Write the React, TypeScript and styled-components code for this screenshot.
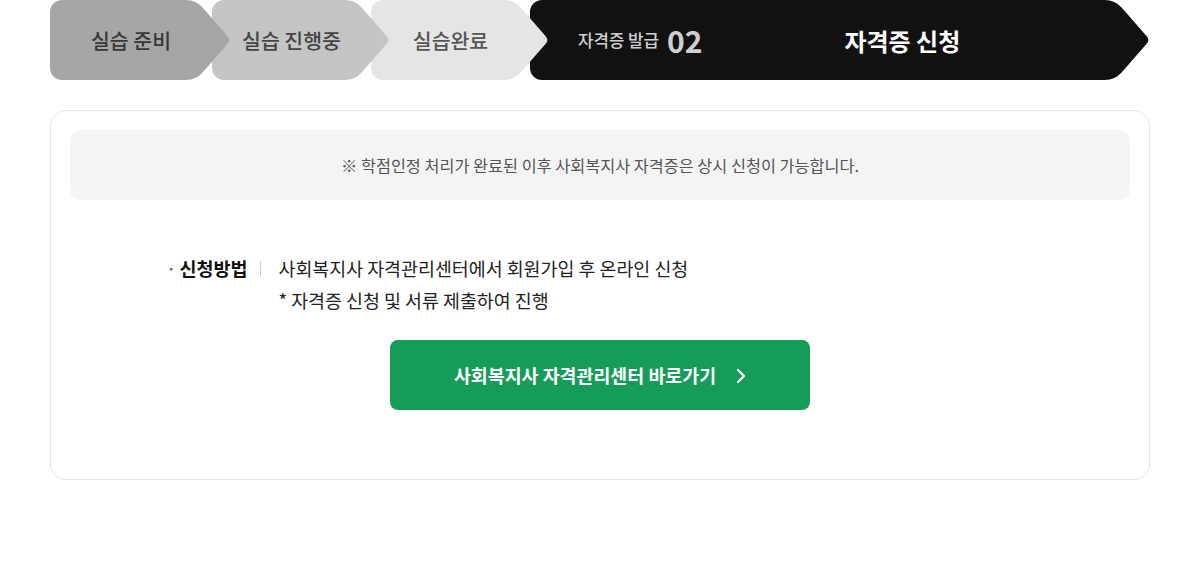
import React from 'react';
import styled, { createGlobalStyle } from 'styled-components';

const GlobalStyle = createGlobalStyle`
  * { box-sizing: border-box; }
  body {
    margin: 0;
    background: #ffffff;
    font-family: "Noto Sans CJK KR", "Noto Sans", sans-serif;
    color: #222222;
  }
`

const STEP_H = 80
const ARROW = 35

// chevron outline for a step of width w
function chevronPath(w: number) {
  const r = 12
  const k = 10
  const k2 = 5
  const dx = 0.659
  const dy = 0.753
  const b = w - ARROW
  const m = STEP_H / 2
  return [
    `M ${r} 0`,
    `L ${b - k} 0`,
    `Q ${b} 0 ${b + k * dx} ${k * dy}`,
    `L ${w - k2 * dx} ${m - k2 * dy}`,
    `Q ${w} ${m} ${w - k2 * dx} ${m + k2 * dy}`,
    `L ${b + k * dx} ${STEP_H - k * dy}`,
    `Q ${b} ${STEP_H} ${b - k} ${STEP_H}`,
    `L ${r} ${STEP_H}`,
    `A ${r} ${r} 0 0 1 0 ${STEP_H - r}`,
    `L 0 ${r}`,
    `A ${r} ${r} 0 0 1 ${r} 0`,
    'Z',
  ].join(' ')
}

const steps = [
  { label: '실습 준비', width: 181, bg: '#a6a6a6', color: '#383838' },
  { label: '실습 진행중', width: 178, bg: '#c5c5c5', color: '#444444' },
  { label: '실습완료', width: 178, bg: '#e5e5e5', color: '#555555' },
]

function App() {
  return (
    <>
      <GlobalStyle />
      <Page>
        <StepBar>
          {steps.map((s, i) => (
            <Step key={s.label} $width={s.width} $z={10 - i}>
              <StepShape width={s.width} height={STEP_H} viewBox={`0 0 ${s.width} ${STEP_H}`}>
                <path d={chevronPath(s.width)} fill={s.bg} />
              </StepShape>
              <StepLabel $color={s.color}>{s.label}</StepLabel>
            </Step>
          ))}
          <Step $width={620} $z={5}>
            <StepShape width={620} height={STEP_H} viewBox={`0 0 620 ${STEP_H}`}>
              <path d={chevronPath(620)} fill="#111111" />
            </StepShape>
            <CurrentStep>
              <CurrentKicker>자격증 발급</CurrentKicker>
              <CurrentNum>02</CurrentNum>
              <CurrentTitle>자격증 신청</CurrentTitle>
            </CurrentStep>
          </Step>
        </StepBar>

        <Card>
          <Notice>※ 학점인정 처리가 완료된 이후 사회복지사 자격증은 상시 신청이 가능합니다.</Notice>

          <MethodRow>
            <MethodLabel>
              <Dot>·</Dot>신청방법
            </MethodLabel>
            <Divider />
            <MethodText>
              <p>사회복지사 자격관리센터에서 회원가입 후 온라인 신청</p>
              <p>* 자격증 신청 및 서류 제출하여 진행</p>
            </MethodText>
          </MethodRow>

          <GoButton type="button">
            사회복지사 자격관리센터 바로가기
            <svg width="10" height="16" viewBox="0 0 10 16" fill="none">
              <path d="M2 2 L8 8 L2 14" stroke="#ffffff" strokeWidth="2.2" strokeLinecap="round" strokeLinejoin="round" />
            </svg>
          </GoButton>
        </Card>
      </Page>
    </>
  )
}


const Page = styled.div`
  width: 1100px;
  margin: 0 auto;
`


const StepBar = styled.div`
  display: flex;
  height: 80px;
`


const Step = styled.div<{ $width: number; $z: number }>`
  position: relative;
  flex: 0 0 ${p => p.$width}px;
  height: 80px;
  z-index: ${p => p.$z};
  display: flex;
  align-items: center;

  & + & {
    margin-left: -19px;
  }
`


const StepShape = styled.svg`
  position: absolute;
  inset: 0;
  display: block;
`


const StepLabel = styled.span<{ $color: string }>`
  position: relative;
  flex: 1;
  padding-right: 19px;
  text-align: center;
  font-size: 20.5px;
  font-weight: 500;
  color: ${p => p.$color};
`


const CurrentStep = styled.div`
  position: relative;
  display: flex;
  align-items: center;
  padding-left: 48px;
`


const CurrentKicker = styled.span`
  font-size: 16.8px;
  font-weight: 500;
  color: #cfcfcf;
`


const CurrentNum = styled.span`
  margin-left: 8px;
  font-size: 30px;
  font-weight: 700;
  color: #cfcfcf;
  line-height: 1;
`


const CurrentTitle = styled.span`
  margin-left: 142px;
  font-size: 24px;
  font-weight: 700;
  color: #ffffff;
`


const Card = styled.div`
  margin-top: 30px;
  height: 370px;
  border: 1px solid #e6e6e6;
  border-radius: 16px;
  padding: 19px 19px 0;
  display: flex;
  flex-direction: column;
  align-items: center;
`


const Notice = styled.div`
  align-self: stretch;
  height: 70px;
  border-radius: 10px;
  background: #f4f4f4;
  display: flex;
  align-items: center;
  justify-content: center;
  font-size: 16.3px;
  color: #555555;
`


const MethodRow = styled.div`
  align-self: stretch;
  display: flex;
  align-items: flex-start;
  margin-top: 52px;
  padding-left: 96px;
`


const MethodLabel = styled.span`
  font-size: 18.5px;
  font-weight: 700;
  line-height: 32px;
  color: #111111;
`


const Dot = styled.span`
  font-weight: 400;
  color: #555555;
  margin-right: 3px;
`


const Divider = styled.span`
  width: 1px;
  height: 15px;
  margin: 9px 17px 0 13px;
  background: #cccccc;
`


const MethodText = styled.div`
  font-size: 18.4px;
  line-height: 32px;
  color: #222222;

  p {
    margin: 0;
  }
`


const GoButton = styled.button`
  margin-top: 24px;
  width: 420px;
  height: 70px;
  border: 0;
  border-radius: 8px;
  background: #169c59;
  display: flex;
  align-items: center;
  justify-content: center;
  gap: 20px;
  font-family: inherit;
  font-size: 18.4px;
  font-weight: 700;
  color: #ffffff;
  cursor: pointer;

  svg {
    margin-top: 1px;
  }
`


export default App
